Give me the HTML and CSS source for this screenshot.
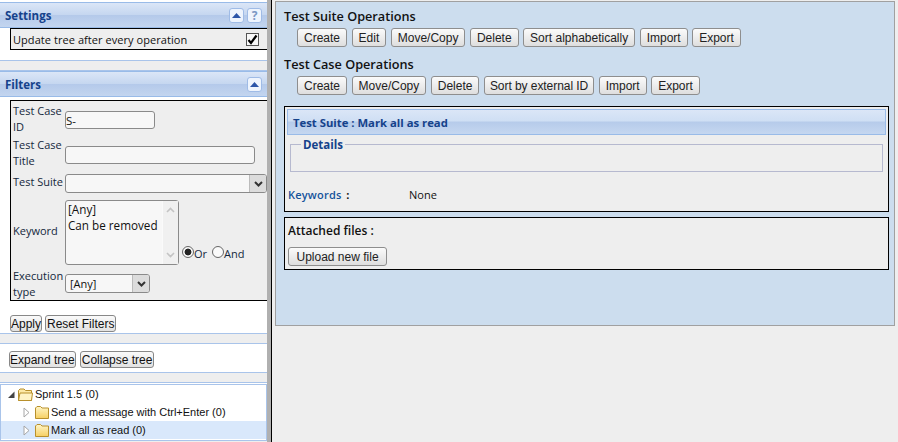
FILE: index.html
```html
<!DOCTYPE html>
<html lang="en">
<head>
  <meta charset="UTF-8" />
  <title>Test Specification</title>
  <link rel="stylesheet" href="styles.css">
</head>
<body>
  <div class="left">
    <div class="panel-head first">
      <span>Settings</span>
      <span class="tools">
        <span class="tool"><svg width="9" height="5" viewBox="0 0 9 5"><path d="M4.5 0 9 5H0z" fill="#2c55a8"/></svg></span>
        <span class="tool help">?</span>
      </span>
    </div>
    <div class="settings-body">
      <div class="setting-box">
        <span>Update tree after every operation</span>
        <span class="check"><svg width="11" height="11" viewBox="0 0 11 11"><path d="M1.5 6 4 9 9.5 1.5" fill="none" stroke="#000" stroke-width="2.2"/></svg></span>
      </div>
    </div>
    <div class="band"></div>
    <div class="panel-head">
      <span>Filters</span>
      <span class="tools">
        <span class="tool"><svg width="9" height="5" viewBox="0 0 9 5"><path d="M4.5 0 9 5H0z" fill="#2c55a8"/></svg></span>
      </span>
    </div>
    <div class="filters-body">
      <div class="filter-box">
        <div class="row row-id">
          <label>Test Case ID</label>
          <input class="field field-id" type="text" value="S-">
        </div>
        <div class="row row-title">
          <label>Test Case Title</label>
          <input class="field field-title" type="text">
        </div>
        <div class="row row-suite">
          <label>Test Suite</label>
          <div class="select select-suite">
            <span></span>
            <span class="select-arrow"><svg width="9" height="6" viewBox="0 0 9 6"><path d="M1 1 4.500 4.500 8 1" fill="none" stroke="#333" stroke-width="2"/></svg></span>
          </div>
        </div>
        <div class="row row-keyword">
          <label>Keyword</label>
          <div class="listbox">
            <div class="options">
              <div>[Any]</div>
              <div>Can be removed</div>
            </div>
            <div class="list-scroll">
              <svg width="9" height="6" viewBox="0 0 9 6"><path d="M1 5 4.500 1.500 8 5" fill="none" stroke="#c4c4c4" stroke-width="1.600"/></svg>
              <svg width="9" height="6" viewBox="0 0 9 6"><path d="M1 1 4.500 4.500 8 1" fill="none" stroke="#c4c4c4" stroke-width="1.600"/></svg>
            </div>
          </div>
          <div class="radios">
            <span class="radio on"></span><span class="radio-label">Or</span>
            <span class="radio radio-and"></span><span class="radio-label">And</span>
          </div>
        </div>
        <div class="row row-exec">
          <label>Execution type</label>
          <div class="select select-exec">
            <span>[Any]</span>
            <span class="select-arrow"><svg width="9" height="6" viewBox="0 0 9 6"><path d="M1 1 4.500 4.500 8 1" fill="none" stroke="#333" stroke-width="2"/></svg></span>
          </div>
        </div>
      </div>
      <div class="filter-actions">
        <button class="small-btn">Apply</button>
        <button class="small-btn">Reset Filters</button>
      </div>
    </div>
    <div class="band"></div>
    <div class="tree-actions">
      <button class="small-btn">Expand tree</button>
      <button class="small-btn">Collapse tree</button>
    </div>
    <div class="band"></div>
    <div class="tree">
      <div class="node">
        <svg class="arrow" width="8" height="9" viewBox="0 0 8 9"><path d="M7.500 1.500V8H1z" fill="#444"/></svg>
        <svg class="folder" width="16" height="15" viewBox="0 0 16 15"><path d="M1.500 13.500V3.500L3 2h4l1.500 1.500h6v10z" fill="#fde9a6" stroke="#b8902c"/><path d="M1.500 13.500 3 6h12.500l-1 7.500z" fill="#fff3c4" stroke="#b8902c"/></svg>
        <span>Sprint 1.5 (0)</span>
      </div>
      <div class="node child">
        <svg class="arrow" width="7" height="11" viewBox="0 0 7 11"><path d="M1 1 6 5.500 1 10z" fill="#fff" stroke="#a6a6a6"/></svg>
        <svg class="folder" width="16" height="15" viewBox="0 0 16 15"><defs><linearGradient id="fold" x1="0" y1="0" x2="0" y2="1"><stop offset="0" stop-color="#fff6c8"/><stop offset="1" stop-color="#f6cf62"/></linearGradient></defs><path d="M1.500 13.500V3L3 1.500h3.500L8 3h6.500v10.500z" fill="url(#fold)" stroke="#b8902c"/></svg>
        <span>Send a message with Ctrl+Enter (0)</span>
      </div>
      <div class="node child selected">
        <svg class="arrow" width="7" height="11" viewBox="0 0 7 11"><path d="M1 1 6 5.500 1 10z" fill="#fff" stroke="#a6a6a6"/></svg>
        <svg class="folder" width="16" height="15" viewBox="0 0 16 15"><path d="M1.500 13.500V3L3 1.500h3.500L8 3h6.500v10.500z" fill="url(#fold)" stroke="#b8902c"/></svg>
        <span>Mark all as read (0)</span>
      </div>
    </div>
  </div>

  <div class="splitter"></div>

  <div class="right">
    <div class="main">
      <h2>Test Suite Operations</h2>
      <div class="ops">
        <button>Create</button>
        <button>Edit</button>
        <button>Move/Copy</button>
        <button>Delete</button>
        <button>Sort alphabetically</button>
        <button>Import</button>
        <button>Export</button>
      </div>
      <h2>Test Case Operations</h2>
      <div class="ops">
        <button>Create</button>
        <button>Move/Copy</button>
        <button>Delete</button>
        <button class="tight">Sort by external ID</button>
        <button>Import</button>
        <button>Export</button>
      </div>
      <div class="box box-suite">
        <div class="suite-head">Test Suite : Mark all as read</div>
        <fieldset class="details">
          <legend>Details</legend>
        </fieldset>
        <div class="keywords">
          <span class="kw-label"><span class="kw-name">Keywords</span> <b>:</b></span>
          <span>None</span>
        </div>
      </div>
      <div class="box box-files">
        <div class="files-title">Attached files :</div>
        <button>Upload new file</button>
      </div>
    </div>
  </div>
</body>
</html>
```

FILE: styles.css
```css
html, body {
  margin: 0;
  height: 442px;
  overflow: hidden;
}
body {
  display: flex;
  background: #eeeeee;
  font-family: "Open Sans", "Noto Sans", sans-serif;
  font-size: 11px;
  color: #111;
}
.left {
  width: 267px;
  flex: none;
  background: #fff;
  display: flex;
  flex-direction: column;
  overflow: hidden;
  padding-top: 2px;
  height: 439px;
}
.splitter {
  width: 4px;
  flex: none;
  background: #b0b0b0;
  border-right: 1px solid #000;
}
.right {
  flex: 1;
  padding: 1px 3px 0 3px;
}

/* panel headers */
.panel-head {
  height: 24px;
  flex: none;
  display: flex;
  align-items: center;
  justify-content: space-between;
  padding: 0 5px 0 5px;
  border-top: 1px solid #99bbe8;
  border-bottom: 1px solid #99bbe8;
  background: linear-gradient(#dbe6f7 0, #c6d7f0 48%, #b4c9ea 50%, #c3d5ef 100%);
  color: #15428b;
  font-weight: 700;
  font-size: 11.500px;
}
.tools {
  display: flex;
  gap: 3px;
}
.tool {
  width: 13px;
  height: 13px;
  border: 1px solid #9fbbe6;
  border-radius: 3px;
  background: #eef4fd;
  display: flex;
  align-items: center;
  justify-content: center;
  font-size: 12px;
  font-weight: 700;
  color: #7b97c4;
}

/* settings */
.settings-body {
  height: 32px;
  flex: none;
  padding-left: 10px;
}
.setting-box {
  height: 20px;
  border: 1px solid #000;
  border-right: none;
  background: #eee;
  display: flex;
  align-items: center;
  justify-content: space-between;
  padding: 0 8px 0 2px;
  letter-spacing: 0.060px;
}
.check {
  width: 11px;
  height: 11px;
  border: 1px solid #555;
  background: #f8f8f8;
  display: flex;
}
.band {
  height: 9px;
  flex: none;
  background: #eee;
  border-top: 1px solid #a9c4ea;
  border-bottom: 1px solid #a9c4ea;
}

/* filters */
.filters-body {
  height: 236px;
  flex: none;
  padding: 3px 0 0 10px;
  box-sizing: border-box;
}
.filter-box {
  height: 201px;
  box-sizing: border-box;
  border: 1px solid #000;
  border-right: none;
  background: #eee;
  padding-left: 2px;
  overflow: hidden;
}
.row {
  display: flex;
  align-items: center;
}
.row label {
  width: 52px;
  flex: none;
  line-height: 16px;
  color: #14283c;
}
.row-id {
  height: 35px;
}
.row-title {
  height: 34px;
}
.row-suite {
  height: 27px;
}
.row-suite label, .row-keyword label {
  margin-top: -4px;
}
.row-keyword {
  height: 71px;
}
.row-exec {
  height: 32px;
}
.field {
  box-sizing: border-box;
  height: 18px;
  border: 1px solid #8a8a8a;
  border-radius: 3px;
  background: #f7f7f7;
  padding: 0;
  margin: 3px 0 0;
  font: 11.500px "Open Sans", sans-serif;
  color: #111;
  outline: none;
}
.field-id {
  width: 90px;
}
.field-title {
  width: 190px;
}
.select {
  box-sizing: border-box;
  height: 19px;
  border: 1px solid #8a8a8a;
  border-radius: 3px;
  background: #f7f7f7;
  display: flex;
  justify-content: space-between;
  overflow: hidden;
  line-height: 17px;
  padding-left: 4px;
  flex: none;
}
.select-suite {
  width: 202px;
}
.select-exec {
  width: 85px;
  margin-top: -1px;
}
.select-arrow {
  width: 16px;
  flex: none;
  border-left: 1px solid #bbb;
  background: #dcdcdc;
  display: flex;
  align-items: center;
  justify-content: center;
}
.listbox {
  box-sizing: border-box;
  width: 114px;
  height: 65px;
  flex: none;
  border: 1px solid #8a8a8a;
  border-radius: 3px;
  background: #f7f7f7;
  display: flex;
  justify-content: space-between;
}
.options {
  padding: 0 2px;
  line-height: 16px;
  white-space: nowrap;
  font-size: 11.700px;
}
.list-scroll {
  width: 16px;
  background: #f0f0f0;
  border-left: 1px solid #fafafa;
  display: flex;
  flex-direction: column;
  justify-content: space-between;
  align-items: center;
  padding: 6px 0;
  box-sizing: border-box;
}
.radios {
  align-self: flex-end;
  display: flex;
  align-items: flex-end;
  margin: 0 0 9px 3px;
  font-size: 11px;
  line-height: 12px;
}
.radio {
  width: 10px;
  height: 10px;
  border: 1px solid #666;
  border-radius: 50%;
  background: #fafafa;
  margin-bottom: 1px;
}
.radio.on {
  background: radial-gradient(circle, #222 0, #222 3.200px, #fafafa 3.700px);
}
.radio-and {
  margin-left: 5px;
}
.radio-label {
  margin-bottom: -1px;
  color: #14283c;
}
.filter-actions {
  display: flex;
  gap: 3px;
  margin-top: 14px;
}
.small-btn {
  box-sizing: border-box;
  height: 17px;
  padding: 0 1px;
  border: 1px solid #888;
  border-radius: 3px;
  background: linear-gradient(#fafafa, #e2e2e2);
  font: 12px "Liberation Sans", sans-serif;
  color: #111;
}
.small-btn:first-child {
  padding: 0;
}

/* tree */
.tree-actions {
  height: 28px;
  flex: none;
  display: flex;
  align-items: center;
  gap: 4px;
  padding: 3px 0 0 9px;
  box-sizing: border-box;
}
.tree {
  flex: 1;
  border: 1px solid #a9c4ea;
  margin-top: 1px;
  font: 11px/18px "Liberation Sans", sans-serif;
}
.node {
  height: 18px;
  display: flex;
  align-items: center;
  gap: 2px;
  padding-left: 6px;
}
.node .folder {
  flex: none;
}
.node.child {
  padding-left: 22px;
  gap: 1px;
}
.node.child .folder {
  margin-left: 3px;
}
.node.selected {
  background: #d9e8fb;
}

/* main area */
.main {
  width: 605px;
  height: 323px;
  border: 1px solid #a0a0a0;
  background: #ccddee;
  padding: 0 5px 0 8px;
}
h2 {
  margin: 0;
  padding-top: 5px;
  height: 16px;
  line-height: 18px;
  font-size: 12.700px;
  font-weight: 600;
  color: #111;
}
.ops {
  display: flex;
  gap: 4.500px;
  padding: 5px 0 0 13px;
  height: 27px;
  box-sizing: border-box;
}
.ops button, .box-files button {
  box-sizing: border-box;
  height: 19px;
  padding: 0 6px;
  border: 1px solid #8e8e8e;
  border-radius: 3px;
  background: linear-gradient(#fbfbfb, #dedede);
  font: 12px "Liberation Sans", sans-serif;
  color: #222;
}
.ops button.tight {
  padding: 0 5px;
  letter-spacing: -0.060px;
}
.box {
  box-sizing: border-box;
  border: 1px solid #000;
  background: #eee;
}
.box-suite {
  height: 106px;
  margin-top: 8px;
  padding: 2px;
}
.box-files {
  height: 53px;
  margin-top: 5px;
  padding: 0 3px;
}
.box-files button {
  padding: 0 7.500px;
  margin-top: 1px;
}
.suite-head {
  height: 26px;
  box-sizing: border-box;
  border: 1px solid #99bbe8;
  background: linear-gradient(#dbe6f7 0, #cfdff4 46%, #b6cbea 50%, #c5d7f0 100%);
  color: #15428b;
  font-weight: 700;
  font-size: 11.300px;
  line-height: 25px;
  padding-left: 5px;
}
.details {
  margin: 3px 3px 0 3px;
  padding: 0;
  height: 34px;
  box-sizing: border-box;
  border: 1px solid #b6b9cf;
}
.details legend {
  margin-left: 10px;
  padding: 0 2px;
  color: #15428b;
  font-weight: 700;
  font-size: 11.500px;
  line-height: 13px;
}
.keywords {
  display: flex;
  margin-top: 15px;
  padding-left: 1px;
}
.kw-label {
  width: 121px;
}
.kw-name {
  color: #15539b;
  font-weight: 600;
  letter-spacing: 0.200px;
}
.kw-label b {
  margin-left: 2px;
}
.files-title {
  font-weight: 600;
  font-size: 12px;
  line-height: 14px;
  padding-top: 6px;
  height: 22px;
}
```
